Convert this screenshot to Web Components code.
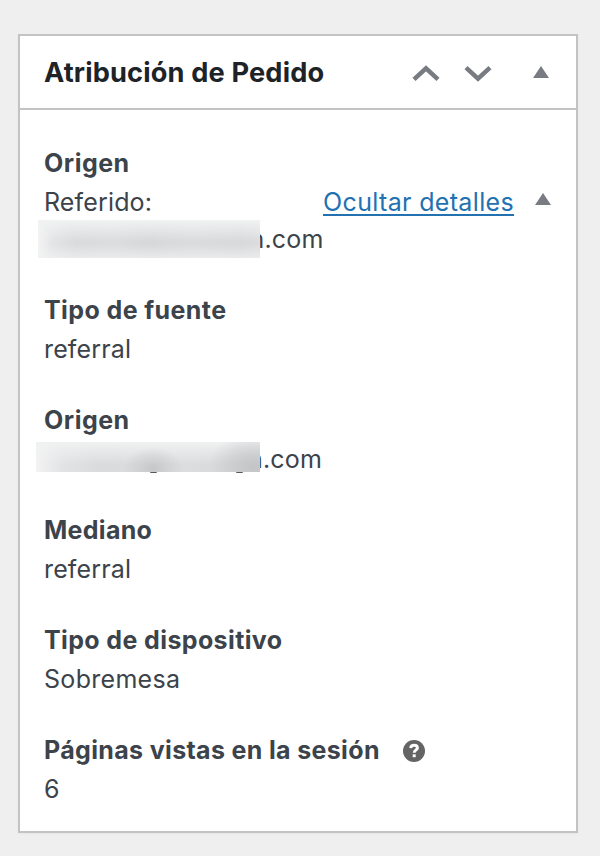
<!DOCTYPE html>
<html lang="es">
<head>
<meta charset="utf-8">
<title>Atribución de Pedido</title>
<style>
body { margin: 0; min-height: 856px; background: #efefef; font-family: Inter, "Liberation Sans", sans-serif; color: #3c434a; box-sizing: border-box; padding: 34px 22px 0 18px; }
</style>
</head>
<body>
<meta-box>
  <span slot="title">Atribución de Pedido</span>
  <data-field style="--ls:.5px;--vs:.15px">
    <span slot="label">Origen</span>
    <span>Referido:</span>
    <details-link slot="action">Ocultar detalles</details-link>
    <masked-host slot="extra">n.com</masked-host>
  </data-field>
  <data-field style="--ls:.4px;--vs:.15px"><span slot="label">Tipo de fuente</span>referral</data-field>
  <data-field style="--ls:.5px"><span slot="label">Origen</span><masked-host class="low">n.com</masked-host></data-field>
  <data-field style="--ls:.3px;--vs:.15px"><span slot="label">Mediano</span>referral</data-field>
  <data-field style="--ls:.38px;--vs:.3px"><span slot="label">Tipo de dispositivo</span>Sobremesa</data-field>
  <data-field style="--ls:.34px"><span slot="label">Páginas vistas en la sesión</span><help-tip slot="help"></help-tip>6</data-field>
</meta-box>
<script>
const define = (name, html) => customElements.define(name, class extends HTMLElement {
  connectedCallback() {
    if (!this.shadowRoot) this.attachShadow({ mode: 'open' }).innerHTML = html;
  }
});

define('toggle-arrow', `
<style>:host{display:block;width:16px;height:12px}svg{display:block}</style>
<svg width="16" height="12" viewBox="0 0 16 12"><path d="M8 0L16 12H0Z" fill="#787c82"/></svg>`);

define('order-arrow', `
<style>:host{display:block;width:28px;height:17px}:host([down]) svg{transform:scaleY(-1)}svg{display:block}</style>
<svg width="28" height="17" viewBox="0 0 28 17"><path d="M2 14.4L14 3.4L26 14.4" fill="none" stroke="#787c82" stroke-width="4.5"/></svg>`);

define('help-tip', `
<style>:host{display:block;width:22px;height:22px}svg{display:block}</style>
<svg width="22" height="22" viewBox="0 0 22 22"><circle cx="11" cy="11" r="11" fill="#646464"/><path d="M7.7 8.1C7.9 6.1 9.3 5.3 11.1 5.3C13 5.3 14.4 6.3 14.4 7.9C14.4 10 11.2 10 11.2 12.8" fill="none" stroke="#fff" stroke-width="2.9"/><rect x="9.7" y="14.3" width="3" height="2.9" fill="#fff"/></svg>`);

define('details-link', `
<style>
:host{display:flex;align-items:center;height:37px}
a{color:#2271b1;letter-spacing:.34px;text-decoration:none;line-height:29px;height:28px;margin-top:-2px;border-bottom:2px solid #2271b1;box-sizing:border-box;margin-right:21px}
toggle-arrow{margin:0 1px 8px 0}
</style>
<a href="#"><slot></slot></a><toggle-arrow></toggle-arrow>`);

define('masked-host', `
<style>
:host{display:block;position:relative;height:37px;padding-left:205.5px;letter-spacing:.2px;white-space:nowrap}
:host(.low){padding-left:204px}
i,b{position:absolute}
i{left:-6px;top:-1px;width:222px;height:38px;background:
 linear-gradient(180deg,#f1f2f2,#f1f2f200 55%,#f1f2f200 65%,#f1f2f2b0),
 linear-gradient(90deg,#f3f3f4,#e3e4e6 7%,#dadbdd 17%,#dcdddf 34%,#d7d8da 50%,#dbdcde 70%,#d8d9db 92%,#dcdddf)}
:host(.low) i{left:-8px;top:1px;width:224px;height:30px;background:
 radial-gradient(ellipse 30px 22px at 117px 27px,#c6c7c9,#c6c7c980 45%,#c6c7c900),
 radial-gradient(ellipse 46px 34px at 218px 25px,#c3c4c6,#c3c4c690 45%,#c3c4c600),
 linear-gradient(180deg,#f0f1f1,#f0f1f100 75%),
 linear-gradient(90deg,#f3f3f4,#e2e3e5 12%,#dadbdd 28%,#dcdddf 60%,#d8d9db)}
b{display:none;top:31px;width:7px;height:1px;border-radius:0 0 4px 4px;background:#55595e}
:host(.low) b{display:block}
</style>
<slot></slot><i></i><b style="left:106px"></b><b style="left:192px"></b>`);

define('data-field', `
<style>
:host{display:block;font-size:25px;line-height:37px}
.label{display:flex;align-items:center;height:39px;margin-bottom:1px;font-weight:650;letter-spacing:var(--ls,0)}
.label ::slotted(help-tip){margin:1px 0 0 23px}
.value{display:flex;justify-content:space-between;height:37px;letter-spacing:var(--vs,0)}
</style>
<div class="label"><slot name="label"></slot><slot name="help"></slot></div>
<div class="value"><div><slot></slot></div><slot name="action"></slot></div>
<slot name="extra"></slot>`);

define('meta-box', `
<style>
:host{display:flex;flex-direction:column;box-sizing:border-box;width:560px;height:799px;border:2px solid #c3c3c4;background:#fff;box-shadow:0 1px 2px #0000000a}
header{display:flex;align-items:center;height:72px;flex:none;border-bottom:2px solid #c3c3c4;padding:0 27px 0 24px}
h2{flex:1;margin:2px 0 0;font-size:27.2px;line-height:36px;font-weight:650;letter-spacing:.15px;color:#1d2327}
.up{margin:2px 24px 0 0}.down{margin:2px 41px 0 0}
toggle-arrow{margin-top:-1px}
main{display:flex;flex-direction:column;gap:33px;padding:34px 24px 0}
</style>
<header><h2><slot name="title"></slot></h2><order-arrow class="up"></order-arrow><order-arrow class="down" down></order-arrow><toggle-arrow></toggle-arrow></header>
<main><slot></slot></main>`);
</script>
</body>
</html>
